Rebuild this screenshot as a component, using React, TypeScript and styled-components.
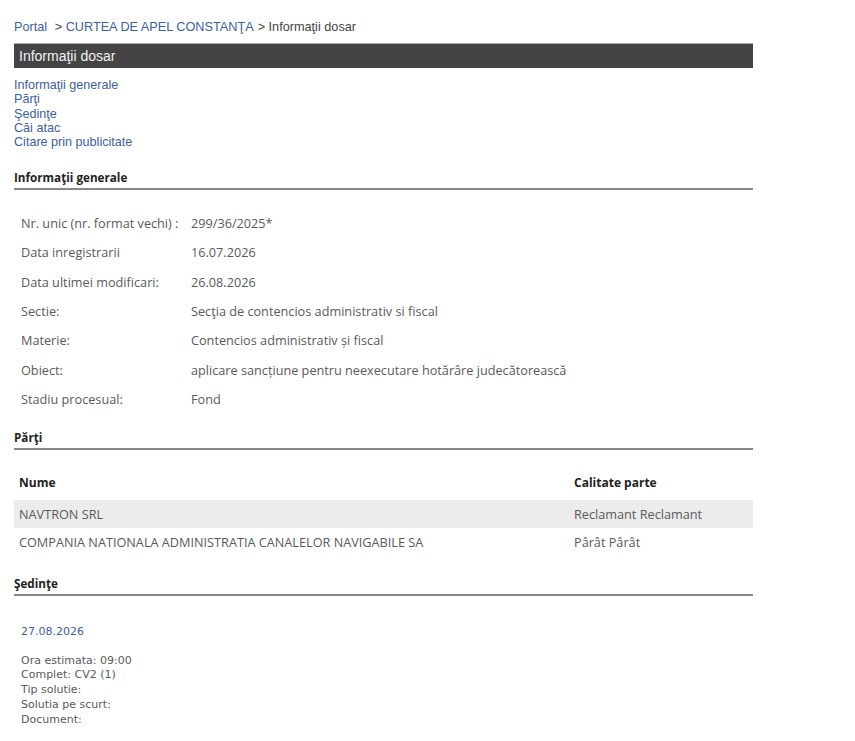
import styled, { createGlobalStyle } from 'styled-components';

const GlobalStyle = createGlobalStyle`
  body {
    margin: 0;
    background: #fff;
    font-family: "Liberation Sans", Arial, sans-serif;
  }
`;

const Page = styled.div`
  width: 739px;
  padding: 19px 14px 20px;
`;

const Breadcrumb = styled.div`
  font-size: 12.7px;
  line-height: 16px;
  color: #444;
  margin-bottom: 8px;
`;

const Crumb = styled.a`
  color: #3d60a0;
  text-decoration: none;
  margin-right: 4px;
`;

const TitleBar = styled.div`
  background: #444;
  border-top: 1px solid #aaa;
  height: 24px;
  line-height: 24px;
  padding-left: 5px;
  color: #f2f2f2;
  font-size: 14px;
`;

const Nav = styled.nav`
  display: flex;
  flex-direction: column;
  margin-top: 10px;
  font-size: 12.6px;
  line-height: 14.25px;
`;

const NavLink = styled.a`
  color: #3d60a0;
  text-decoration: none;
`;

const SectionTitle = styled.h3<{ $top: number }>`
  margin: ${(p) => p.$top}px 0 0;
  font-family: "Open Sans", "Liberation Sans", sans-serif;
  font-size: 11.7px;
  font-weight: bold;
  color: #222;
  line-height: 16px;
  padding-bottom: 3px;
  border-bottom: 2px solid #888;
`;

const InfoTable = styled.div`
  display: grid;
  grid-template-columns: 170px 1fr;
  grid-auto-rows: 29.33px;
  align-items: center;
  margin-top: 18px;
  padding-left: 7px;
  font-family: "Open Sans", "Liberation Sans", sans-serif;
  font-size: 12.7px;
  color: #5a5a5a;
`;

const PartyTable = styled.div`
  margin-top: 16px;
  font-family: "Open Sans", "Liberation Sans", sans-serif;
  font-size: 12.7px;
  color: #5a5a5a;
`;

const PartyRow = styled.div<{ $head?: boolean; $shade?: boolean }>`
  display: grid;
  grid-template-columns: 555px 1fr;
  align-items: center;
  height: ${(p) => (p.$head ? 34 : 28)}px;
  padding-left: 5px;
  background: ${(p) => (p.$shade ? '#ececec' : 'transparent')};
  font-size: ${(p) => (p.$head ? '12px' : 'inherit')};
  font-weight: ${(p) => (p.$head ? 'bold' : 'normal')};
  color: ${(p) => (p.$head ? '#222' : '#5a5a5a')};
`;

const Hearing = styled.div`
  margin-top: 29px;
  padding-left: 7px;
  font-family: "DejaVu Sans", Verdana, sans-serif;
  font-size: 11px;
  color: #5a5a5a;
`;

const HearingDate = styled.div`
  color: #3d60a0;
  line-height: 14px;
  margin-bottom: 15px;
`;

const HearingLine = styled.div`
  line-height: 14.75px;
`;

const info: [string, string][] = [
  ['Nr. unic (nr. format vechi) :', '299/36/2025*'],
  ['Data inregistrarii', '16.07.2026'],
  ['Data ultimei modificari:', '26.08.2026'],
  ['Sectie:', 'Secţia de contencios administrativ si fiscal'],
  ['Materie:', 'Contencios administrativ și fiscal'],
  ['Obiect:', 'aplicare sancțiune pentru neexecutare hotărâre judecătorească'],
  ['Stadiu procesual:', 'Fond'],
];

const parties: [string, string][] = [
  ['NAVTRON SRL', 'Reclamant Reclamant'],
  ['COMPANIA NATIONALA ADMINISTRATIA CANALELOR NAVIGABILE SA', 'Pârât Pârât'],
];

const hearingLines = [
  'Ora estimata: 09:00',
  'Complet: CV2 (1)',
  'Tip solutie:',
  'Solutia pe scurt:',
  'Document:',
];

export default function App() {
  return (
    <>
      <GlobalStyle />
      <Page>
        <Breadcrumb>
          <Crumb href="#">Portal</Crumb> &gt;{' '}
          <Crumb href="#">CURTEA DE APEL CONSTANŢA</Crumb>&gt; Informaţii dosar
        </Breadcrumb>
        <TitleBar>Informaţii dosar</TitleBar>
        <Nav>
          <NavLink href="#">Informaţii generale</NavLink>
          <NavLink href="#">Părţi</NavLink>
          <NavLink href="#">Şedinţe</NavLink>
          <NavLink href="#">Căi atac</NavLink>
          <NavLink href="#">Citare prin publicitate</NavLink>
        </Nav>

        <SectionTitle $top={20}>Informaţii generale</SectionTitle>
        <InfoTable>
          {info.map(([label, value]) => (
            <>
              <span key={label}>{label}</span>
              <span key={label + '-v'}>{value}</span>
            </>
          ))}
        </InfoTable>

        <SectionTitle $top={15}>Părţi</SectionTitle>
        <PartyTable>
          <PartyRow $head>
            <span>Nume</span>
            <span>Calitate parte</span>
          </PartyRow>
          {parties.map(([name, role], i) => (
            <PartyRow key={name} $shade={i % 2 === 0}>
              <span>{name}</span>
              <span>{role}</span>
            </PartyRow>
          ))}
        </PartyTable>

        <SectionTitle $top={19}>Şedinţe</SectionTitle>
        <Hearing>
          <HearingDate>27.08.2026</HearingDate>
          {hearingLines.map((line) => (
            <HearingLine key={line}>{line}</HearingLine>
          ))}
        </Hearing>
      </Page>
    </>
  );
}
